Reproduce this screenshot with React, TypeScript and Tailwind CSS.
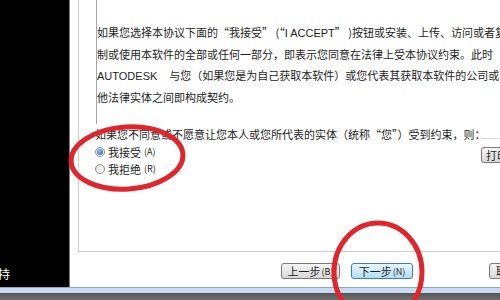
import React from "react";

function Radio({ checked }: { checked: boolean }) {
  return (
    <span className="w-[10px] h-[10px] rounded-full border border-[#8c8c8c] bg-linear-to-br from-[#dcdcdc] to-[#ffffff] flex items-center justify-center shrink-0">
      {checked && (
        <span className="w-[6px] h-[6px] rounded-full bg-[radial-gradient(circle_at_40%_35%,#8cc8f0,#1b5c98)]" />
      )}
    </span>
  );
}

function Btn({
  label,
  hot,
  focus,
  className,
}: {
  label: string;
  hot?: string;
  focus?: boolean;
  className: string;
}) {
  return (
    <div
      className={
        "h-[16px] rounded-[3px] border flex items-center justify-center shrink-0 text-[11px] leading-none text-[#1e1e1e] " +
        (focus
          ? "border-[#3c7fb1] bg-linear-to-b from-[#eaf6fd] to-[#b4def5] "
          : "border-[#7a7a7a] bg-linear-to-b from-[#f5f5f5] to-[#d8d8d8] ") +
        className
      }
    >
      <span>{label}</span>
      {hot && <span className="text-[9px] ml-[1px]">({hot})</span>}
    </div>
  );
}

export default function App() {
  return (
    <div className="w-[500px] h-[300px] overflow-hidden relative bg-white flex flex-col font-['Noto_Sans_CJK_SC',sans-serif] text-[#1e1e1e]">
      <div className="flex h-[287px]">
        <div className="w-[70px] bg-black border-r border-[#7a7a7a] flex flex-col justify-end pb-[6px] overflow-hidden">
          <span className="text-white text-[12px] leading-[14px] -ml-[2px]">持</span>
        </div>
        <div className="flex-1 flex flex-col pl-[8px] overflow-hidden">
          <div className="h-[252px] border-l border-b border-[#cfcfcf] pl-[16px] flex flex-col">
            <div className="h-[124px] border-l border-[#a5a5a5] ml-[1px] pt-[22px] text-[11px] leading-[21px] whitespace-nowrap overflow-hidden">
              <div>
                如果您选择本协议下面的“我接受” (“<span className="font-['Liberation_Sans',sans-serif]">I ACCEPT</span>” )按钮或安装、上传、访问或者复
              </div>
              <div>制或使用本软件的全部或任何一部分，即表示您同意在法律上受本协议约束。此时</div>
              <div>
                <span className="font-['Liberation_Sans',sans-serif]">AUTODESK</span>
                <span className="ml-[12px]">与您（如果您是为自己获取本软件）或您代表其获取本软件的公司或其</span>
              </div>
              <div>他法律实体之间即构成契约。</div>
            </div>
            <div className="flex items-end">
              <div className="w-[386px] shrink-0 text-[11px] leading-[20px] whitespace-nowrap">
                如果您不同意或不愿意让您本人或您所代表的实体（统称“您”）受到约束，则：
              </div>
              <div className="flex-1 h-[6px] border-t border-[#d8d8d8]" />
            </div>
            <div className="flex">
              <div className="w-[386px] flex flex-col shrink-0">
                <div className="h-[16px] flex items-center gap-[3px] text-[11px]">
                  <Radio checked />
                  <span>我接受</span>
                  <span className="text-[9px]">(A)</span>
                </div>
                <div className="h-[18px] flex items-center gap-[3px] text-[11px]">
                  <Radio checked={false} />
                  <span>我拒绝</span>
                  <span className="text-[9px]">(R)</span>
                </div>
              </div>
              <Btn label="打印" className="w-[40px] mt-[3px] justify-start pl-[4px]" />
            </div>
          </div>
          <div className="flex mt-[11px] pl-[203px]">
            <Btn label="上一步" hot="B" className="w-[59px]" />
            <Btn label="下一步" hot="N" focus className="w-[62px] ml-[11px]" />
            <Btn label="取消" hot="C" className="w-[60px] ml-[76px] justify-start pl-[6px]" />
          </div>
        </div>
      </div>
      <div className="h-[1px] bg-[#8ea7c3]" />
      <div className="h-[5px] bg-[#c5daf0]" />
      <div className="flex-1 bg-linear-to-b from-[#555555] to-[#707070]" />
      <svg
        className="absolute inset-0 pointer-events-none"
        width="500"
        height="300"
        viewBox="0 0 500 300"
      >
        <ellipse cx="127" cy="158" rx="56" ry="31" fill="none" stroke="#e0262c" strokeWidth="5" transform="rotate(-4 127 158)" />
        <ellipse cx="378" cy="272" rx="44" ry="49" fill="none" stroke="#e0262c" strokeWidth="5" />
      </svg>
    </div>
  );
}
